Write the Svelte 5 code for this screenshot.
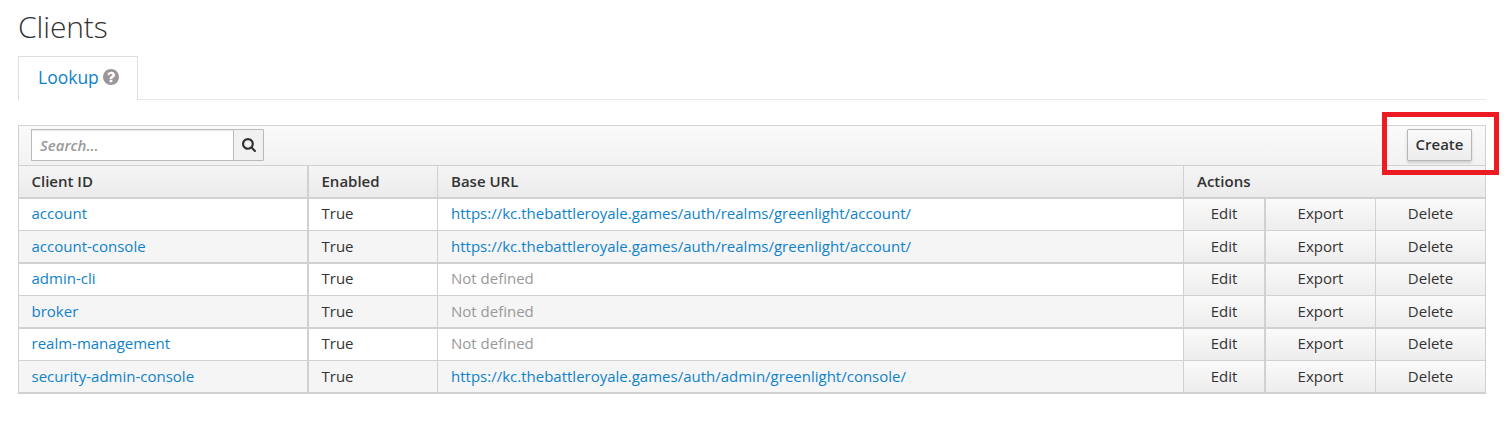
<script>
  const account = 'https://kc.thebattleroyale.games/auth/realms/greenlight/account/';
  const clients = [
    { id: 'account', url: account },
    { id: 'account-console', url: account },
    { id: 'admin-cli' },
    { id: 'broker' },
    { id: 'realm-management' },
    { id: 'security-admin-console', url: 'https://kc.thebattleroyale.games/auth/admin/greenlight/console/' }
  ];
</script>

<main>
  <h1>Clients</h1>
  <nav>
    <div class="tab">
      <span class="link">Lookup</span>
      <svg class="help" viewBox="0 0 1536 1536"><path fill="#9c9698" d="M896 1248v-192q0-14-9-23t-23-9H672q-14 0-23 9t-9 23v192q0 14 9 23t23 9h192q14 0 23-9t9-23zm256-672q0-88-55.500-163T958 297t-170-41q-243 0-371 213-15 24 8 42l132 100q7 6 19 6 16 0 25-12 53-68 86-92 34-24 86-24 48 0 85.500 26t37.500 59q0 38-20 61t-68 45q-63 28-115.500 86.500T640 892v36q0 14 9 23t23 9h192q14 0 23-9t9-23q0-19 21.500-49.500T972 829q32-18 49-28.500t46-35 44.500-48 28-60.500 12.500-81zm384 192q0 209-103 385.500T1153.500 1433 768 1536t-385.500-103T103 1153.500 0 768t103-385.500T382.500 103 768 0t385.500 103T1433 382.500 1536 768z"/></svg>
    </div>
  </nav>

  <section class="table">
    <div class="toolbar">
      <div class="search">
        <input type="text" placeholder="Search..." />
        <button aria-label="Search">
          <svg viewBox="0 0 1664 1664"><path fill="#333" d="M1152 704q0-185-131.500-316.500T704 256 387.500 387.500 256 704t131.500 316.500T704 1152t316.500-131.500T1152 704zm512 832q0 52-38 90t-90 38q-54 0-90-38l-343-342q-179 124-399 124-143 0-273.500-55.500t-225-150-150-225T0 704t55.500-273.500 150-225 225-150T704 0t273.500 55.500 225 150 150 225T1408 704q0 220-124 399l343 343q37 37 37 90z"/></svg>
        </button>
      </div>
      <div class="create-wrap">
        <button class="create">Create</button>
        <span class="highlight"></span>
      </div>
    </div>
    <div class="row head">
      <div>Client ID</div>
      <div>Enabled</div>
      <div>Base URL</div>
      <div class="actions">Actions</div>
    </div>
    {#each clients as c}
      <div class="row body">
        <div><span class="link">{c.id}</span></div>
        <div>True</div>
        <div>{#if c.url}<span class="link">{c.url}</span>{:else}<span class="muted">Not defined</span>{/if}</div>
        <div class="act">Edit</div>
        <div class="act">Export</div>
        <div class="act">Delete</div>
      </div>
    {/each}
  </section>
</main>

<style>
  :global(body) { background: #fff; }
  * { box-sizing: border-box; }
  main {
    height: 429px;
    padding: 6px 23px 0 18px;
    overflow: hidden;
    font-family: "Open Sans", sans-serif;
    font-size: 15px;
    line-height: 20px;
    color: #333;
  }
  h1 {
    margin: 0;
    height: 50px;
    font-size: 30px;
    line-height: 41px;
    font-weight: 300;
    letter-spacing: -0.1px;
  }
  .link { color: #0f82cc; }
  nav {
    display: flex;
    height: 44px;
    box-shadow: inset 0 -1px #e9e9e9;
  }
  .tab {
    display: flex;
    width: 120px;
    padding: 8px 0 0 19px;
    background: #fff;
    border: 1px solid #dedede;
    border-bottom: 0;
    font-size: 17.5px;
    line-height: 24px;
  }
  .help { width: 16px; height: 16px; margin: 4px 0 0 4px; }
  .table {
    margin-top: 25px;
    border: solid #d1d1d1;
    border-width: 1px 1px 2px;
  }
  .toolbar {
    display: flex;
    justify-content: space-between;
    height: 39px;
    padding: 3px 13px 0 12px;
    background: linear-gradient(#fafafa, #f2f2f2);
  }
  .search { display: flex; width: 233px; height: 32px; }
  input {
    flex: 0 0 202px;
    padding: 0 8px;
    border: 1px solid #bababa;
    border-right: 0;
    border-radius: 1px 0 0 1px;
    box-shadow: inset 0 1px 1px rgba(0, 0, 0, .08);
    font: 15px "Open Sans", sans-serif;
    outline: 0;
    min-width: 0;
  }
  input::placeholder { color: #999; font-style: italic; font-weight: 600; opacity: 1; }
  .search button {
    display: flex;
    flex: 0 0 31px;
    padding: 8px 0 0 8px;
    background: #f1f1f1;
    border: 1px solid #bababa;
    border-radius: 0 1px 1px 0;
  }
  .search svg { width: 14px; height: 14px; }
  .create-wrap { position: relative; height: 32px; }
  .create {
    display: block;
    width: 65px;
    height: 32px;
    padding: 0 0 2px;
    background: linear-gradient(#fafafa, #ededed);
    border: 1px solid #b7b7b7;
    border-radius: 1px;
    box-shadow: 0 2px 3px rgba(0, 0, 0, .15);
    color: #333;
    font: 600 15px "Open Sans", sans-serif;
  }
  .highlight {
    position: absolute;
    left: -25px;
    top: -17px;
    width: 117px;
    height: 63px;
    border: 5px solid #ed1c24;
  }
  .row {
    display: grid;
    grid-template-columns: 288px 130px 746px 81px 111px 110px;
    height: 32px;
    border-top: 1px solid #d1d1d1;
  }
  .row > div {
    padding: 5px 0 0 13px;
    border-left: 1px solid #d1d1d1;
    white-space: nowrap;
  }
  .row > div:nth-child(1) { border-left: 0; padding-left: 12.5px; }
  .row > div:nth-child(2) { border-left-width: 2px; padding-left: 12.5px; }
  .head { background: linear-gradient(#f5f5f5, #ebebeb); font-weight: 600; }
  .row > .actions { grid-column: span 3; }
  .body:nth-child(odd) { height: 33px; border-top-width: 2px; }
  .body:nth-child(odd) > div { padding-top: 4px; }
  .body:nth-child(even) { background: #f5f5f5; }
  .row > .act {
    padding-left: 0;
    text-align: center;
    background: linear-gradient(#fafafa, #ededed);
  }
  .row > .act:nth-child(5) { border-left-width: 2px; }
  .muted { color: #999; }
</style>
